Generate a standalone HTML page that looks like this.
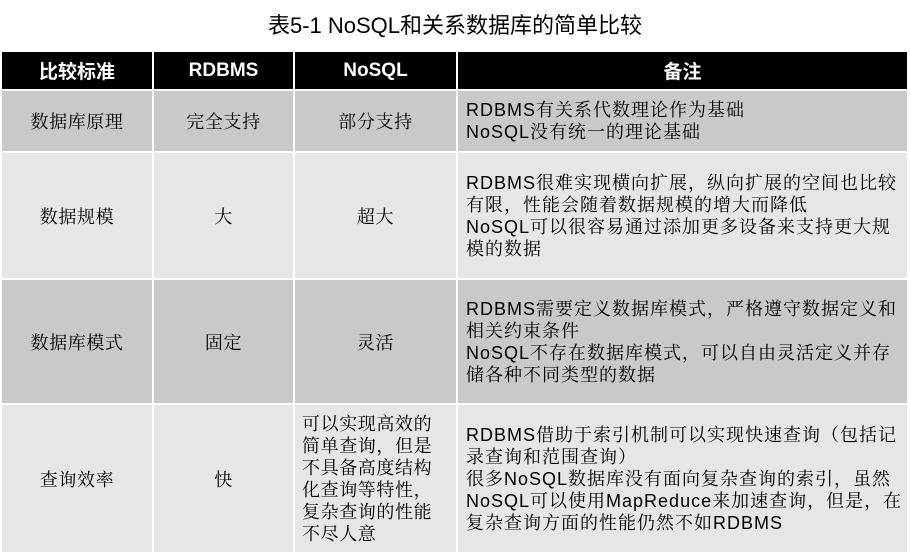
<!DOCTYPE html>
<html><head><meta charset="utf-8"><style>
body{margin:0;width:910px;height:557px;background:#fff;position:relative;overflow:hidden;font-family:"Liberation Sans","Noto Serif CJK SC",serif;color:#000}
.t{position:absolute;top:8px;left:0;width:910px;text-align:center;font-size:22px;font-family:"Liberation Sans","Noto Sans CJK SC",sans-serif}
.c{position:absolute;display:flex;align-items:center;justify-content:center;text-align:center;font-size:18px;box-sizing:border-box;letter-spacing:0.6px;white-space:nowrap}
.h{background:#000;color:#fff;font-weight:bold;font-size:19px;letter-spacing:0;font-family:"Liberation Sans","Noto Sans CJK SC",sans-serif}
.d{background:#c9c9c9}.l{background:#e6e6e6}
.n{justify-content:flex-start;text-align:left;padding-left:8px;line-height:22px;letter-spacing:1px}
</style></head><body>
<div class="t">表5-1 NoSQL和关系数据库的简单比较</div>
<div class="c h" style="left:2px;top:52px;width:150px;height:37px">比较标准</div>
<div class="c h" style="left:154px;top:52px;width:139px;height:37px">RDBMS</div>
<div class="c h" style="left:295px;top:52px;width:161px;height:37px">NoSQL</div>
<div class="c h" style="left:458px;top:52px;width:449px;height:37px">备注</div>

<div class="c d" style="left:2px;top:91px;width:150px;height:60px">数据库原理</div>
<div class="c d" style="left:154px;top:91px;width:139px;height:60px">完全支持</div>
<div class="c d" style="left:295px;top:91px;width:161px;height:60px">部分支持</div>
<div class="c d n" style="left:458px;top:91px;width:449px;height:60px">RDBMS有关系代数理论作为基础<br>NoSQL没有统一的理论基础</div>

<div class="c l" style="left:2px;top:153px;width:150px;height:125px">数据规模</div>
<div class="c l" style="left:154px;top:153px;width:139px;height:125px">大</div>
<div class="c l" style="left:295px;top:153px;width:161px;height:125px">超大</div>
<div class="c l n" style="left:458px;top:153px;width:449px;height:125px">RDBMS很难实现横向扩展，纵向扩展的空间也比较<br>有限，性能会随着数据规模的增大而降低<br>NoSQL可以很容易通过添加更多设备来支持更大规<br>模的数据</div>

<div class="c d" style="left:2px;top:280px;width:150px;height:123px">数据库模式</div>
<div class="c d" style="left:154px;top:280px;width:139px;height:123px">固定</div>
<div class="c d" style="left:295px;top:280px;width:161px;height:123px">灵活</div>
<div class="c d n" style="left:458px;top:280px;width:449px;height:123px">RDBMS需要定义数据库模式，严格遵守数据定义和<br>相关约束条件<br>NoSQL不存在数据库模式，可以自由灵活定义并存<br>储各种不同类型的数据</div>

<div class="c l" style="left:2px;top:405px;width:150px;height:147px">查询效率</div>
<div class="c l" style="left:154px;top:405px;width:139px;height:147px">快</div>
<div class="c l n" style="left:295px;top:405px;width:161px;height:147px;padding-left:7px;letter-spacing:0.6px">可以实现高效的<br>简单查询，但是<br>不具备高度结构<br>化查询等特性，<br>复杂查询的性能<br>不尽人意</div>
<div class="c l n" style="left:458px;top:405px;width:449px;height:147px">RDBMS借助于索引机制可以实现快速查询（包括记<br>录查询和范围查询）<br>很多NoSQL数据库没有面向复杂查询的索引，虽然<br>NoSQL可以使用MapReduce来加速查询，但是，在<br>复杂查询方面的性能仍然不如RDBMS</div>
</body></html>
